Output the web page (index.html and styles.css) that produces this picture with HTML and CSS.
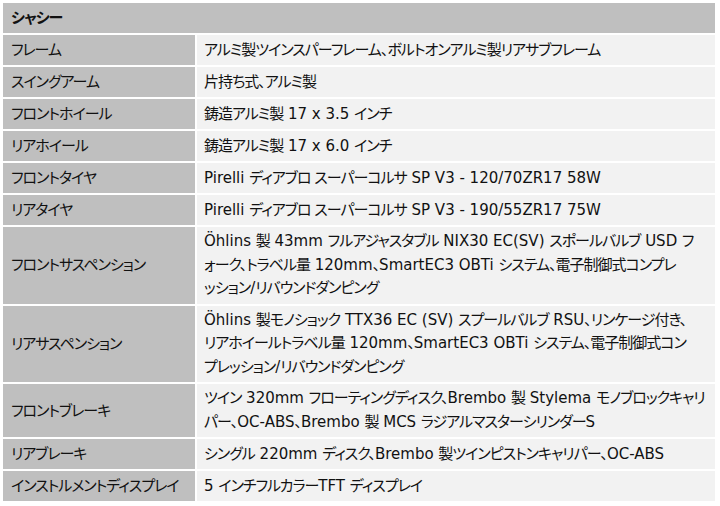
FILE: index.html
```html
<!DOCTYPE html>
<html lang="ja">
<head>
<meta charset="utf-8">
<title>シャシー</title>
<link rel="stylesheet" href="styles.css">
</head>
<body>
<table class="spec">
  <colgroup><col class="c-label"><col class="c-value"></colgroup>
  <tr><th colspan="2" class="head">シャシー</th></tr>
  <tr><th>フレーム</th><td>アルミ製ツインスパーフレーム、ボルトオンアルミ製リアサブフレーム</td></tr>
  <tr><th>スイングアーム</th><td>片持ち式、アルミ製</td></tr>
  <tr><th>フロントホイール</th><td>鋳造アルミ製<span class="lat"> 17 x 3.5 </span>インチ</td></tr>
  <tr><th>リアホイール</th><td>鋳造アルミ製<span class="lat"> 17 x 6.0 </span>インチ</td></tr>
  <tr><th>フロントタイヤ</th><td><span class="lat">Pirelli </span>ディアブロ スーパーコルサ<span class="lat"> SP V3 - 120/70ZR17 58W</span></td></tr>
  <tr><th>リアタイヤ</th><td><span class="lat">Pirelli </span>ディアブロ スーパーコルサ<span class="lat"> SP V3 - 190/55ZR17 75W</span></td></tr>
  <tr><th>フロントサスペンション</th><td class="multi"><span class="lat">Öhlins </span>製<span class="lat"> 43mm </span>フルアジャスタブル<span class="lat"> NIX30 EC(SV) </span>スポールバルブ<span class="lat"> USD </span>フ<br>ォーク、トラベル量<span class="lat"> 120mm</span>、<span class="lat">SmartEC3 OBTi </span>システム、電子制御式コンプレ<br>ッション<span class="lat">/</span>リバウンドダンピング</td></tr>
  <tr><th>リアサスペンション</th><td class="multi"><span class="lat">Öhlins </span>製モノショック<span class="lat"> TTX36 EC (SV) </span>スプールバルブ<span class="lat"> RSU</span>、リンケージ付き、<br>リアホイールトラベル量<span class="lat"> 120mm</span>、<span class="lat">SmartEC3 OBTi </span>システム、電子制御式コン<br>プレッション<span class="lat">/</span>リバウンドダンピング</td></tr>
  <tr><th>フロントブレーキ</th><td class="multi">ツイン<span class="lat"> 320mm </span>フローティングディスク、<span class="lat">Brembo </span>製<span class="lat"> Stylema </span>モノブロックキャリ<br>パー、<span class="lat">OC-ABS</span>、<span class="lat">Brembo </span>製<span class="lat"> MCS </span>ラジアルマスターシリンダー<span class="lat">S</span></td></tr>
  <tr><th>リアブレーキ</th><td>シングル<span class="lat"> 220mm </span>ディスク、<span class="lat">Brembo </span>製ツインピストンキャリパー、<span class="lat">OC-ABS</span></td></tr>
  <tr><th>インストルメントディスプレイ</th><td><span class="lat">5 </span>インチフルカラー<span class="lat">TFT </span>ディスプレイ</td></tr>
</table>
</body>
</html>
```
FILE: styles.css
```css
html, body {
  margin: 0;
  padding: 0;
  background: #ffffff;
}
body {
  font-family: "DejaVu Sans", "Noto Sans CJK JP", sans-serif;
  font-size: 15px;
  color: #111111;
  font-feature-settings: "palt";
}
.spec {
  margin: 1px;
  width: 716px;
  table-layout: fixed;
  border-collapse: separate;
  border-spacing: 2px;
}
.c-label { width: 192px; }
.c-value { width: 518px; }
.spec th,
.spec td {
  padding: 3px 6px 3px 8px;
  line-height: 24px;
  vertical-align: middle;
  text-align: left;
  white-space: nowrap;
  overflow: hidden;
  letter-spacing: -1px;
}
.spec th {
  background: #bfbfbf;
  font-weight: normal;
}
.spec th.head {
  font-weight: bold;
}
.spec td {
  background: #f2f2f2;
  padding-left: 7px;
}
.spec td.multi {
  line-height: 23.5px;
}
.lat {
  font-size: 15px;
  letter-spacing: 0;
}
```
